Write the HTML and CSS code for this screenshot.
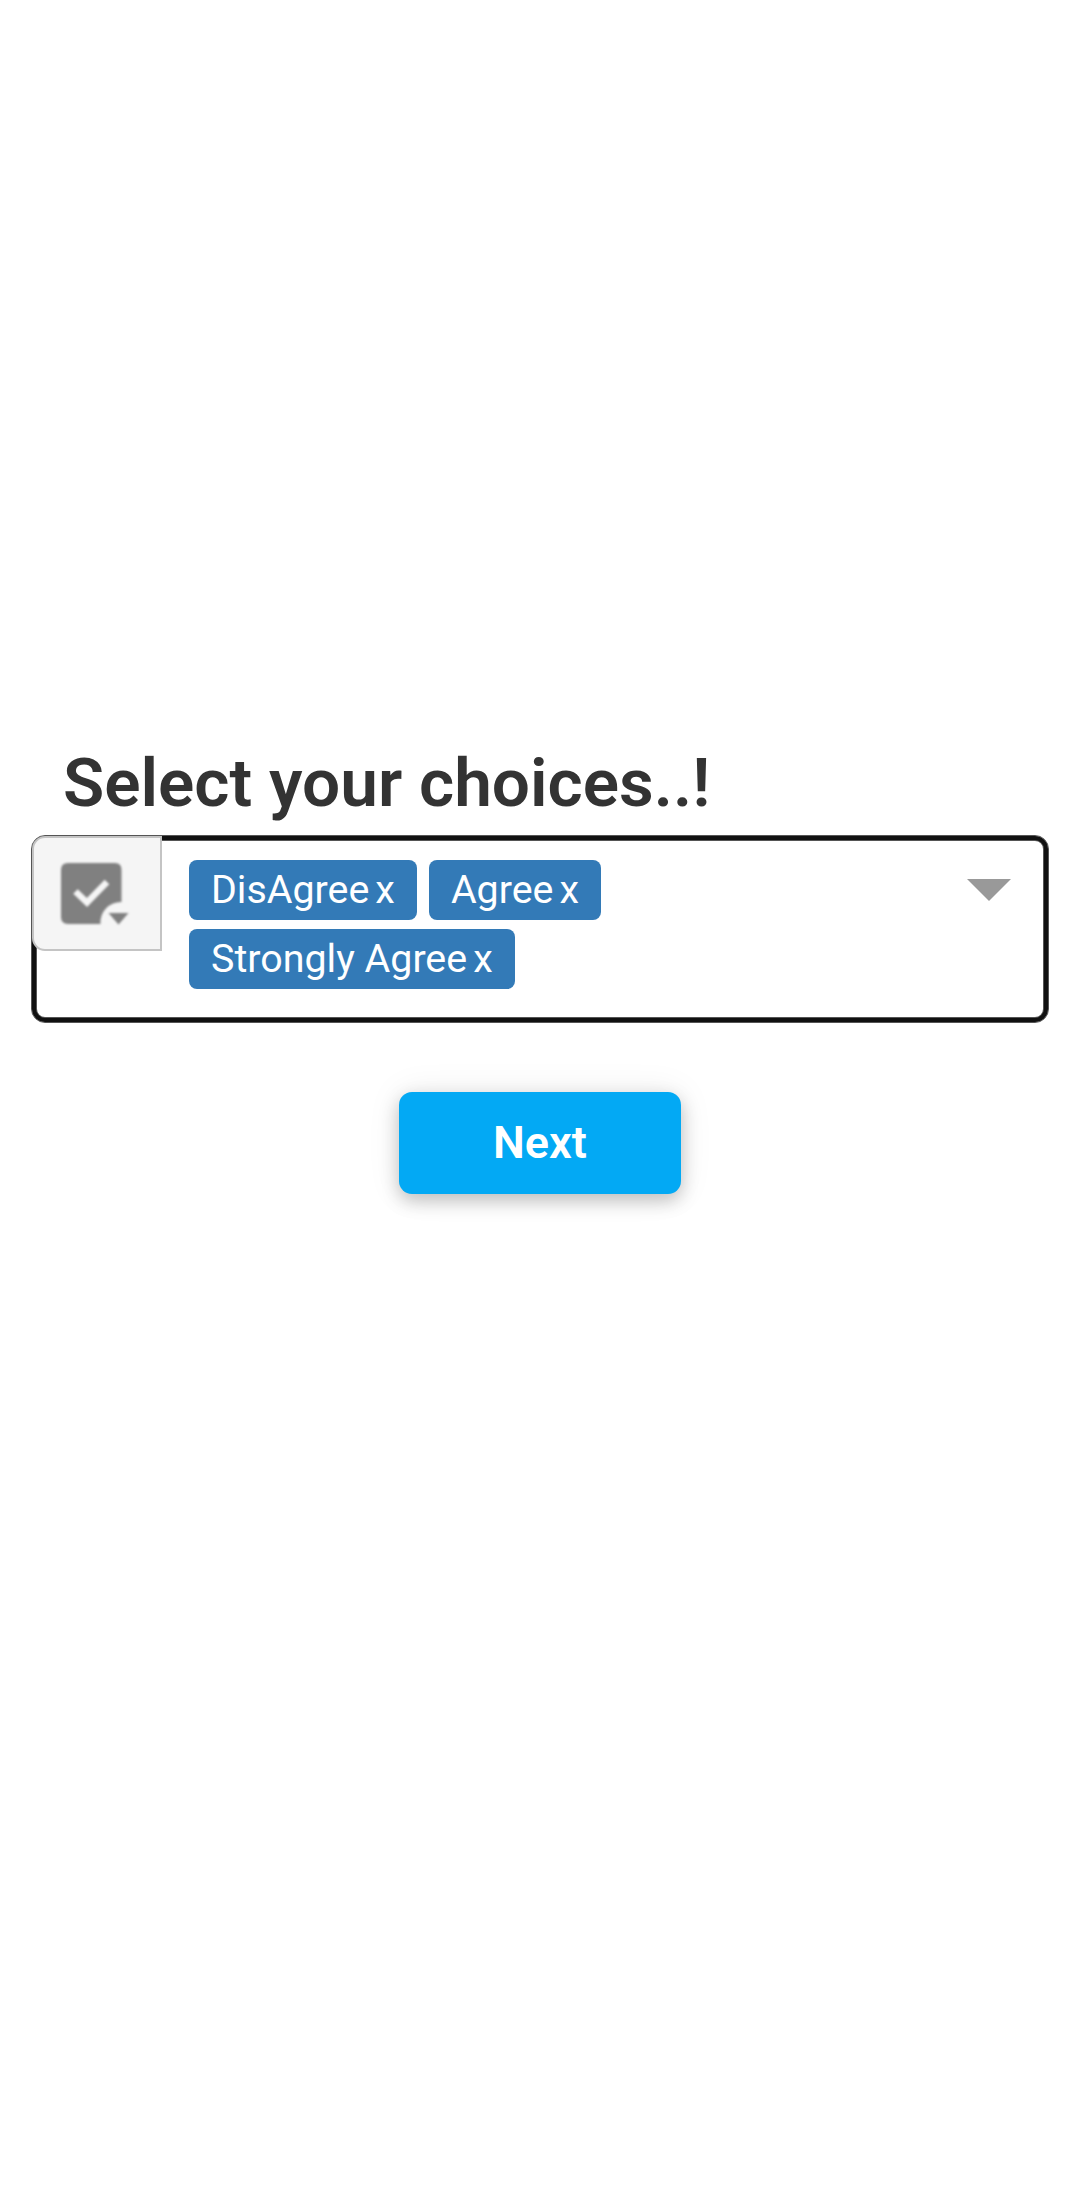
FILE: index.html
```html
<!DOCTYPE html>
<html lang="en">
<head>
<meta charset="utf-8">
<title>Select your choices</title>
<link rel="stylesheet" href="styles.css">
</head>
<body>
<main class="survey">
  <h1 class="title">Select your choices..!</h1>
  <div class="select">
    <div class="icon-box">
      <svg width="70" height="64" viewBox="0 0 70 64"><path fill="#808080" d="M8 1H55Q61.500 1 61.500 8V40A20.500 20.500 0 0 0 40.500 62H8Q1 62 1 55V8Q1 1 8 1Z"/><path d="M15.500 29.500L27 40.500L47 20" fill="none" stroke="#f5f5f5" stroke-width="6.5"/><path fill="#808080" d="M48.500 51H68.500L58.500 62.500Z"/></svg>
    </div>
    <div class="tags">
      <span class="tag">DisAgree<span class="remove">x</span></span>
      <span class="tag">Agree<span class="remove">x</span></span>
      <span class="tag">Strongly Agree<span class="remove">x</span></span>
    </div>
    <svg class="arrow" width="44" height="22" viewBox="0 0 44 22"><path fill="#999" d="M0 0H44L22 22Z"/></svg>
  </div>
  <button class="next">Next</button>
</main>
</body>
</html>
```

FILE: styles.css
```css
* { box-sizing: border-box; }
body { margin: 0; background: #fff; font-family: Roboto, sans-serif; }
.survey { display: flex; flex-direction: column; min-height: 2208px; padding: 745px 31px 0; }
.title { margin: 0; padding-left: 32px; font-size: 67.5px; line-height: 76px; font-weight: 600; color: #333; height: 90px; white-space: nowrap; }
.select { display: flex; align-items: flex-start; height: 188px; border: 1px solid #555; border-radius: 14px; box-shadow: inset 0 0 0 4px #111, inset 0 0 0 5px #555; }
.icon-box { width: 130px; height: 115px; padding: 24px 0 0 26px; background: #f5f5f5; border: 2px solid #c4c4c4; border-radius: 13px 0 0 13px; flex: none; }
.icon-box svg { display: block; filter: blur(.8px); }
.tags { display: flex; flex-wrap: wrap; gap: 9px 12px; width: 600px; margin: 24px 0 0 27px; }
.tag { display: flex; height: 60px; padding: 0 22px; border-radius: 8px; background: #337ab7; color: #fff; font-size: 39.4px; line-height: 60px; white-space: nowrap; }
.remove { margin-left: 6px; }
.arrow { margin: 43px 37px 0 auto; }
.next { align-self: center; width: 282px; height: 102px; margin-top: 69px; padding: 0; border: 0; border-radius: 13px; background: #03a9f4; color: #fff; font: 600 45px/102px Roboto, sans-serif; box-shadow: 0 7px 18px rgba(0,0,0,.22), 0 0 34px rgba(0,0,0,.08); }
```
